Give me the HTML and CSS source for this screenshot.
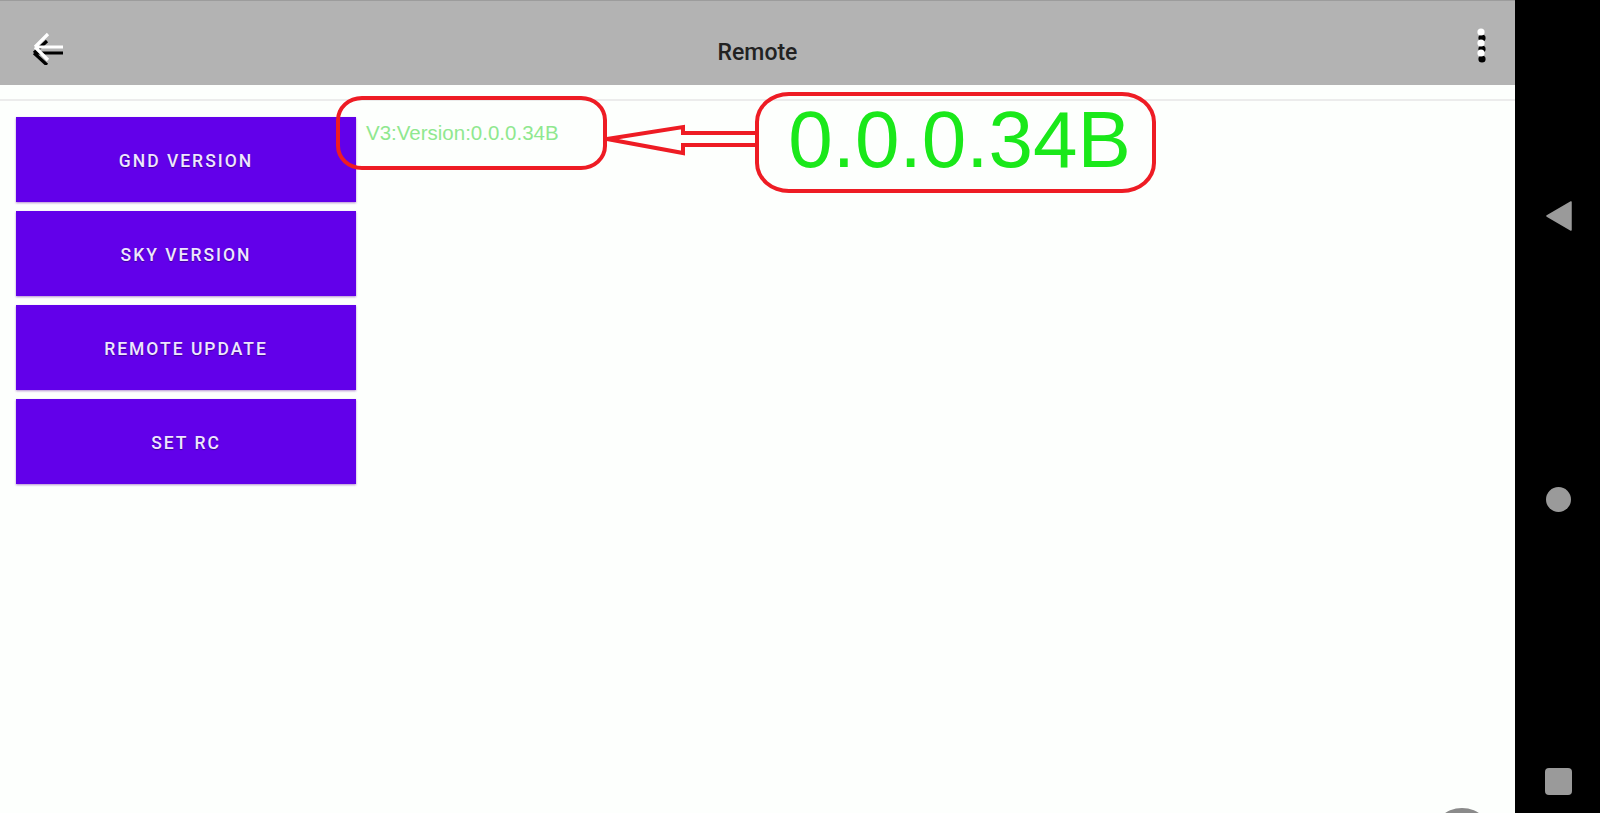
FILE: index.html
```html
<!DOCTYPE html>
<html lang="en">
<head>
    <meta charset="UTF-8">
    <meta name="viewport" content="width=device-width, initial-scale=1.0">
    <link rel="stylesheet" href="styles.css">
    <title>Remote</title>
</head>
<body>
    <div id="screen">
        <div id="app">
            <div id="toolbar">
                <button class="icon-btn back-btn" aria-label="Back">
                    <svg width="34" height="40" viewBox="0 0 34 40">
                        <g fill="none" stroke="#000" stroke-width="3.2">
                            <path d="M3 28 H32 M3 28 L16 16 M3 28 L16 40"/>
                        </g>
                        <g fill="none" stroke="#fff" stroke-width="3.2">
                            <path d="M4 22 H32 M4 22 L17 9 M4 22 L17 35"/>
                        </g>
                    </svg>
                </button>
                <div class="title">Remote</div>
                <button class="icon-btn menu-btn" aria-label="More">
                    <svg width="12" height="36" viewBox="0 0 12 36">
                        <circle cx="6" cy="10" r="3.6" fill="#000"/>
                        <circle cx="6" cy="21" r="3.6" fill="#000"/>
                        <circle cx="6" cy="31" r="3.6" fill="#000"/>
                        <circle cx="5" cy="4" r="3.6" fill="#fff"/>
                        <circle cx="5" cy="15" r="3.6" fill="#fff"/>
                        <circle cx="5" cy="25" r="3.6" fill="#fff"/>
                    </svg>
                </button>
            </div>
            <div class="divider"></div>

            <div id="content">
                <div class="actions">
                    <button class="action">GND VERSION</button>
                    <button class="action">SKY VERSION</button>
                    <button class="action">REMOTE UPDATE</button>
                    <button class="action">SET RC</button>
                </div>
                <div id="versionText">V3:Version:0.0.0.34B</div>
            </div>

            <!-- red callout drawn over the screenshot -->
            <div class="callout-small"></div>
            <svg class="callout-arrow" width="160" height="40" viewBox="600 120 160 40">
                <polygon points="607,139 683,127 683,133 757,133 757,145 683,145 683,153"
                         fill="none" stroke="#ee1c24" stroke-width="4" stroke-linejoin="miter"/>
            </svg>
            <div class="callout-big">0.0.0.34B</div>

            <div class="fab-peek"></div>
        </div>

        <div id="navbar">
            <svg width="26" height="30" viewBox="0 0 26 30">
                <polygon points="1,15 25,1 25,29" fill="#9a9a9a" stroke="#9a9a9a" stroke-width="1.5" stroke-linejoin="round"/>
            </svg>
            <div class="nav-home"></div>
            <div class="nav-recent"></div>
        </div>
    </div>
</body>
</html>
```
FILE: styles.css
```css
body {
    margin: 0;
    font-family: Roboto, 'Noto Sans', sans-serif;
    background-color: #000;
}

#screen {
    display: flex;
    width: 1600px;
    height: 813px;
    overflow: hidden;
}

#app {
    position: relative;
    flex: 1;
    background-color: #fdfffd;
    overflow: hidden;
}

#toolbar {
    display: grid;
    grid-template-columns: 1fr auto 1fr;
    align-items: center;
    height: 84px;
    padding: 0 27px 0 31px;
    background-color: #b3b3b3;
    border-top: 1px solid #9c9c9c;
}

.icon-btn {
    display: flex;
    padding: 0;
    border: none;
    background: none;
}

.back-btn {
    margin-top: 4px;
    justify-self: start;
}

.menu-btn {
    margin-top: 6px;
    justify-self: end;
}

.title {
    font-size: 23px;
    font-weight: 500;
    color: #222;
    margin-top: 18px;
    margin-right: 4px;
}

.divider {
    margin-top: 14px;
    height: 2px;
    background-color: #ececec;
}

#content {
    display: flex;
    align-items: flex-start;
    gap: 10px;
    padding: 16px 0 0 16px;
}

.actions {
    display: flex;
    flex-direction: column;
    gap: 9px;
    width: 340px;
}

.action {
    height: 85px;
    padding-top: 3px;
    border: none;
    background-color: #6200ea;
    color: #eee6ff;
    font-family: Roboto, sans-serif;
    font-size: 17.5px;
    font-weight: 500;
    letter-spacing: 2px;
    text-shadow: 0 1px 1px rgba(40, 0, 90, 0.6);
    box-shadow: 0 1px 2px rgba(90, 0, 160, 0.45);
    cursor: pointer;
}

#versionText {
    margin-top: 4px;
    font-family: 'Liberation Sans', Arial, sans-serif;
    font-size: 20.5px;
    color: #8fe88f;
}

.callout-small {
    position: absolute;
    left: 336px;
    top: 96px;
    width: 263px;
    height: 66px;
    border: 4px solid #ee1c24;
    border-radius: 26px / 24px;
}

.callout-arrow {
    position: absolute;
    left: 600px;
    top: 120px;
}

.callout-big {
    position: absolute;
    left: 755px;
    top: 92px;
    width: 385px;
    height: 93px;
    padding-left: 8px;
    border: 4px solid #ee1c24;
    border-radius: 34px / 30px;
    font-family: 'Liberation Sans', Arial, sans-serif;
    font-size: 80px;
    line-height: 88px;
    text-align: center;
    color: #1ae81a;
}

.fab-peek {
    position: absolute;
    left: 1431px;
    top: 808px;
    width: 62px;
    height: 62px;
    border-radius: 50%;
    background-color: #8a8a8a;
}

#navbar {
    display: flex;
    flex-direction: column;
    align-items: center;
    gap: 256px;
    width: 85px;
    padding-top: 201px;
    padding-left: 2px;
    box-sizing: border-box;
    background-color: #000;
}

.nav-home {
    width: 25px;
    height: 25px;
    border-radius: 50%;
    background-color: #9a9a9a;
}

.nav-recent {
    width: 27px;
    height: 27px;
    border-radius: 4px;
    background-color: #9a9a9a;
}
```
